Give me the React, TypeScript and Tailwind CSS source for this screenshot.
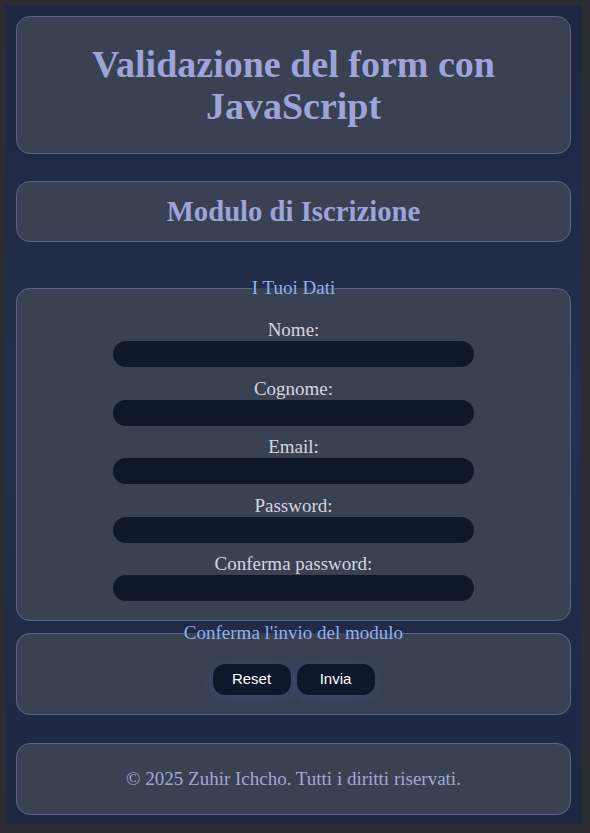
export default function App() {
  const fields = ["Nome:", "Cognome:", "Email:", "Password:", "Conferma password:"];

  return (
    <div className="min-h-[833px] bg-[#2c2d33] pl-[5px] pt-[5px] pr-[8px] pb-[10px]" style={{ fontFamily: '"Liberation Serif", "Times New Roman", serif' }}>
      <div className="bg-gradient-to-b from-[#1f2640] via-[#23304d] to-[#1f2740] px-[11px] pt-[11px] pb-[9px]">
        {/* Header */}
        <header className="rounded-[14px] border border-[#56678a] bg-[#394153] py-[26px] text-center">
          <h1 className="text-[38px] font-bold leading-[42px] text-[#9ea3d8]">
            Validazione del form con
            <br />
            JavaScript
          </h1>
        </header>

        <div className="mt-[27px] rounded-[14px] border border-[#56678a] bg-[#394153] py-[14px] text-center">
          <h2 className="text-[28.7px] font-bold leading-[31px] text-[#9ea3d8]">Modulo di Iscrizione</h2>
        </div>

        {/* Form */}
        <form className="mt-[35px]">
          <fieldset className="rounded-[14px] border border-[#56678a] bg-[#394153] px-4 pt-[21px] pb-[19px]">
            <legend className="mx-auto px-0 text-[19px] leading-[22px] text-[#8fb1ee]">I Tuoi Dati</legend>
            <div className="flex flex-col items-center gap-[11.5px]">
              {fields.map(f => (
                <div key={f} className="flex flex-col items-center">
                  <label className="mb-[1px] text-[19px] leading-[20px] text-[#d3d6e0]">{f}</label>
                  <input
                    type={f.startsWith("Password") || f.startsWith("Conferma") ? "password" : "text"}
                    className="h-[26px] w-[361px] rounded-full bg-[#0f172a] px-3 text-white outline-none"
                  />
                </div>
              ))}
            </div>
          </fieldset>

          <fieldset className="mt-[1px] rounded-[14px] border border-[#56678a] bg-[#394153] px-4 pt-[20px] pb-[19px]">
            <legend className="mx-auto px-0 text-[19px] leading-[22px] text-[#8fb1ee]">Conferma l'invio del modulo</legend>
            <div className="flex justify-center gap-[6px]" style={{ fontFamily: '"Liberation Sans", Arial, sans-serif' }}>
              <button type="reset" className="h-[31px] w-[78px] rounded-[12px] bg-[#0f172a] text-[15px] text-white shadow-[0_2px_14px_rgba(59,110,200,0.25)]">
                Reset
              </button>
              <button type="submit" className="h-[31px] w-[78px] rounded-[12px] bg-[#0f172a] text-[15px] text-white shadow-[0_2px_14px_rgba(59,110,200,0.25)]">
                Invia
              </button>
            </div>
          </fieldset>
        </form>

        {/* Footer */}
        <footer className="mt-[28px] rounded-[14px] border border-[#56678a] bg-[#394153] py-[25px] text-center">
          <p className="text-[19px] leading-[20px] text-[#a2a8d2]">© 2025 Zuhir Ichcho. Tutti i diritti riservati.</p>
        </footer>
      </div>
    </div>
  );
}
